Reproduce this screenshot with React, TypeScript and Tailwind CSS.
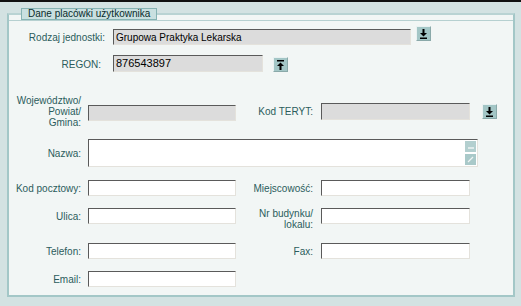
import React from "react";

const font = "font-['Liberation_Sans',Arial,sans-serif]";

function ArrowButton({ dir = "down" }: { dir?: "down" | "up" }) {
  return (
    <div className="flex h-[15px] w-[15px] items-center justify-center border border-t-[#e9f1f1] border-l-[#e9f1f1] border-b-[#8aa9a9] border-r-[#8aa9a9] bg-[#a3c6c6]">
      <svg width="9" height="10" viewBox="0 0 9 10">
        {dir === "down" ? (
          <>
            <rect x="3.5" y="0" width="2" height="4" fill="#000" />
            <path d="M1 4 H8 L4.5 7.5 Z" fill="#000" />
            <rect x="1" y="8.5" width="7" height="1.5" fill="#000" />
          </>
        ) : (
          <>
            <rect x="1" y="0" width="7" height="1.5" fill="#000" />
            <path d="M1 6 H8 L4.5 2.5 Z" fill="#000" />
            <rect x="3.5" y="6" width="2" height="4" fill="#000" />
          </>
        )}
      </svg>
    </div>
  );
}

function Field({
  w,
  h = 16,
  grey = false,
  value,
  textClass = "text-[10px]",
}: {
  w: number;
  h?: number;
  grey?: boolean;
  value?: string;
  textClass?: string;
}) {
  return (
    <div
      className={`flex items-center overflow-hidden border border-t-[#5a5a5a] border-l-[#5a5a5a] border-b-[#e4e2dc] border-r-[#e4e2dc] pl-[2px] text-black ${textClass} ${
        grey ? "bg-[#dcdcdc]" : "bg-white"
      }`}
      style={{ width: w, height: h }}
    >
      {value}
    </div>
  );
}

function Label({ w, children, className = "" }: { w: number; children: React.ReactNode; className?: string }) {
  return (
    <div className={`shrink-0 text-right text-[10px] leading-[11px] text-[#2b5c5c] ${className}`} style={{ width: w }}>
      {children}
    </div>
  );
}

export default function App() {
  return (
    <div className={`h-[306px] w-[521px] overflow-hidden border-t-2 border-[#111] bg-[#d3e2e2] pl-[7px] pr-[6px] pt-[6px] ${font}`}>
      <fieldset className="h-[289px] border-2 border-[#a3c7c7] border-t-[#b9d3d3] bg-[#f2f6f5]">
        <legend className="ml-[12px] h-[12px] border border-[#86b3b3] bg-[#c9e0e0] px-[6px] text-[10px] leading-[10px] text-[#0a2c2c]">
          Dane placówki użytkownika
        </legend>

        <div className="border-t border-[#b6d0d0]">
          {/* Rodzaj jednostki */}
          <div className="mt-[8px] flex items-start">
            <Label w={96} className="mt-[3px]">Rodzaj jednostki:</Label>
            <div className="ml-[8px]">
              <Field w={298} grey value="Grupowa Praktyka Lekarska" textClass="text-[10px]" />
            </div>
            <div className="ml-[5px] -mt-[3px]">
              <ArrowButton />
            </div>
          </div>

          {/* REGON */}
          <div className="mt-[10px] flex items-start">
            <Label w={92} className="mt-[4px]">REGON:</Label>
            <div className="ml-[12px]">
              <Field w={150} h={17} grey value="876543897" textClass="text-[11px]" />
            </div>
            <div className="ml-[10px] mt-[2px]">
              <ArrowButton dir="up" />
            </div>
          </div>

          {/* Województwo / Kod TERYT */}
          <div className="mt-[23px] flex items-center">
            <Label w={72}>
              Województwo/
              <br />
              Powiat/
              <br />
              Gmina:
            </Label>
            <div className="ml-[7px] mt-[3px]">
              <Field w={148} grey />
            </div>
            <Label w={77}>Kod TERYT:</Label>
            <div className="ml-[8px]">
              <Field w={149} h={17} grey />
            </div>
            <div className="ml-[12px]">
              <ArrowButton />
            </div>
          </div>

          {/* Nazwa */}
          <div className="mt-[11px] flex items-center">
            <Label w={72}>Nazwa:</Label>
            <div className="ml-[7px] flex h-[28px] w-[390px] border border-t-[#5a5a5a] border-l-[#5a5a5a] border-b-[#e4e2dc] border-r-[#e4e2dc] bg-white">
              <div className="flex-1" />
              <div className="flex flex-col justify-between py-[1px] pr-[1px]">
                <div className="flex h-[11px] w-[11px] items-end justify-center bg-[#b3cfcf] pb-[3px]">
                  <div className="h-[2px] w-[6px] bg-[#dfeaea]" />
                </div>
                <div className="flex h-[11px] w-[11px] items-center justify-center bg-[#a9c9c9]">
                  <svg width="7" height="7" viewBox="0 0 7 7">
                    <path d="M1 6 L6 1" stroke="#eef4f4" strokeWidth="1.2" />
                  </svg>
                </div>
              </div>
            </div>
          </div>

          {/* Kod pocztowy / Miejscowość */}
          <div className="mt-[13px] flex items-center">
            <Label w={72}>Kod pocztowy:</Label>
            <div className="ml-[7px]">
              <Field w={148} />
            </div>
            <Label w={77}>Miejscowość:</Label>
            <div className="ml-[8px]">
              <Field w={149} />
            </div>
          </div>

          {/* Ulica / Nr budynku */}
          <div className="mt-[12px] flex items-start">
            <Label w={72} className="mt-[3px]">Ulica:</Label>
            <div className="ml-[7px]">
              <Field w={148} />
            </div>
            <Label w={77}>
              Nr budynku/
              <br />
              lokalu:
            </Label>
            <div className="ml-[8px]">
              <Field w={149} />
            </div>
          </div>

          {/* Telefon / Fax */}
          <div className="mt-[13px] flex items-center">
            <Label w={72}>Telefon:</Label>
            <div className="ml-[7px]">
              <Field w={148} />
            </div>
            <Label w={77}>Fax:</Label>
            <div className="ml-[8px]">
              <Field w={149} />
            </div>
          </div>

          {/* Email */}
          <div className="mt-[12px] flex items-center">
            <Label w={72}>Email:</Label>
            <div className="ml-[7px]">
              <Field w={148} />
            </div>
          </div>
        </div>
      </fieldset>
    </div>
  );
}
